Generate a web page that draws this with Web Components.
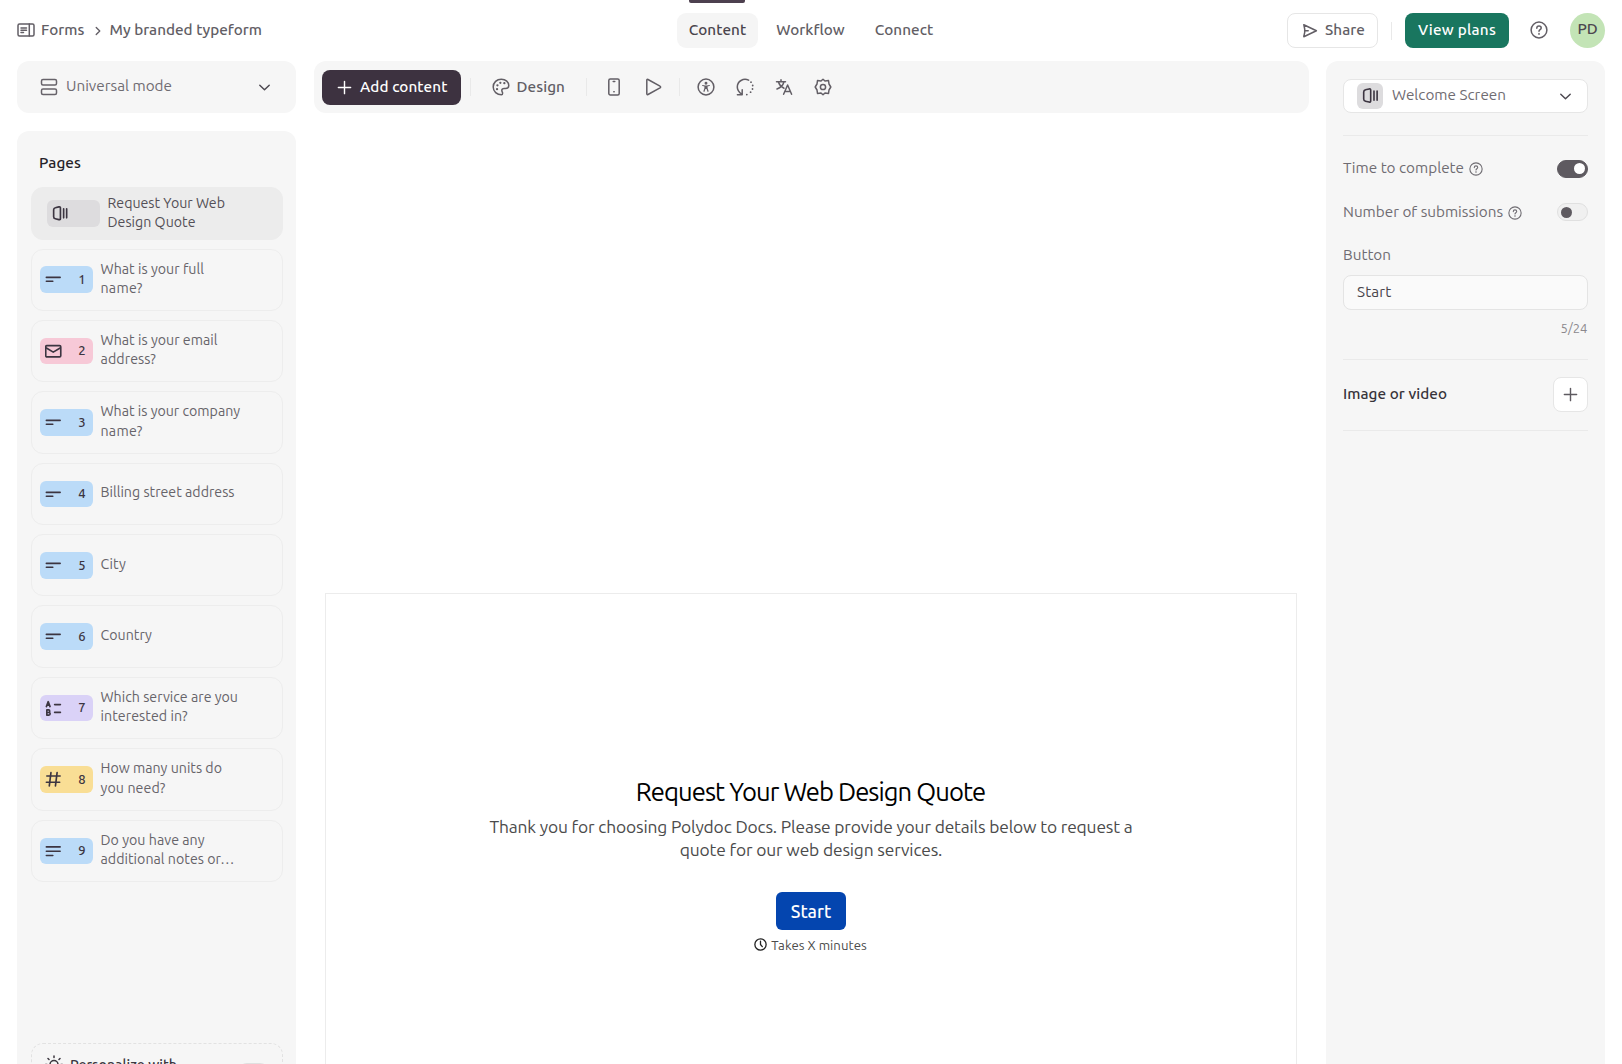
<!DOCTYPE html>
<html lang="en">
<head>
<meta charset="utf-8">
<title>My branded typeform</title>
<style>
  html, body { margin: 0; height: 100%; }
  body {
    font-family: Ubuntu, "Noto Sans", "Open Sans", sans-serif;
    font-size: 15.27px;
    line-height: 20px;
    color: #5e5a60;
    background: #fff;
    overflow: hidden;
  }
</style>
</head>
<body>
<form-builder></form-builder>

<script>
const ICONS = {
  forms: '<rect x="1" y="3" width="16" height="12" rx="1.5"/><path d="M12.3 3v12M4 7h5.5M4 9.3h5.5M4 11.6h2.5"/>',
  next: '<path d="M7 5l4 4-4 4"/>',
  down: '<path d="M4 6.5l5 5 5-5"/>',
  layout: '<rect x="1.5" y="1.5" width="15" height="5.5" rx="1.5"/><rect x="1.5" y="11" width="15" height="5.5" rx="1.5"/>',
  share: '<path d="M2.8 2.7L15.4 8.7 2.8 14.7l.9-4.3V7zM3.7 8.7h3.5"/>',
  help: '<circle cx="9" cy="9" r="7.9"/><path d="M6.8 7.2c0-1.3 1-2.2 2.2-2.2s2.2.8 2.2 2c0 1.6-2.2 1.6-2.2 3.2M9 12.4v.9"/>',
  plus: '<path d="M9 2.5v13M2.5 9h13"/>',
  palette: '<path d="M9.5 16.8C5 16.8 1.2 13.5 1.2 9S4.8 1.2 9.3 1.2s7.5 2.9 7.5 6.4c0 2-1.3 3-3.3 3h-1.3c-1.6 0-2.4.8-2.4 2 0 1.1.8 1.5.8 2.6 0 .9-.4 1.6-1.1 1.6z"/><path d="M8.3 4.8h.1M12.3 5.2h.1M5.4 7.3h.1M5 11.2h.1" stroke-width="2.2"/>',
  phone: '<rect x="3.8" y="1" width="10.4" height="16" rx="1.5"/><path d="M8.2 3.6h1.6M8.8 13.8h.4"/>',
  play: '<path d="M2.8 2.2c0-.8.5-1 1.2-.7l12 6.6c.8.4.8 1.3 0 1.8l-12 6.6c-.7.3-1.2.1-1.2-.7z"/>',
  access: '<circle cx="9" cy="9" r="7.9"/><circle cx="9" cy="5.2" r=".7"/><path d="M5.7 7.5l2.3.5h2l2.3-.5M8 8v2.3l-1 3M10 8v2.3l1 3M8 10.5h2M9 8v2" stroke-width="1.2"/>',
  loop: '<path d="M12.6 2.2C7.5-.3 1.3 3.2 1.3 9c0 2.9 1.9 5.5 4.6 7.2M6.2 11.7v5H1.4"/><path d="M15 4.2h.01M16.7 7.5h.01M16.5 11h.01M14.6 14.2h.01M10.8 16.6h.01" stroke-width="1.8"/>',
  translate: '<path d="M1.5 3.8h9M6 1.8v2M9 3.8C8 7.5 5.5 9.8 2 11M3.6 4.5C4.5 7 6.8 9.3 9 10.2M8.6 16.3L12.6 7l4 9.3M10 13.6h5.3"/>',
  gear: '<path d="M9 1.200l2 1.800 3.500-.5.500 3.500 1.800 3-1.800 3-.5 3.500-3.500-.5-2 1.800-2-1.800-3.500.5-.5-3.500L1.200 9 3 6l.5-3.500 3.500.5z"/><circle cx="9" cy="9" r="2.600"/>',
  door: '<path d="M1.8 5.2c0-1.3.5-2 1.8-2.2l3.9-.9c1-.2 1.7.1 1.7 1v11.8c0 .9-.7 1.2-1.7 1L3.6 15c-1.3-.2-1.8-.9-1.8-2.2zM12.7 4.2v9.8M16 4.2v9.8"/>',
  short: '<path d="M1.5 7h15M1.5 11.2h7"/>',
  long: '<path d="M1.5 4.3h15M1.5 9h15M1.5 13.6h7"/>',
  mail: '<rect x=".8" y="2.8" width="16.4" height="12.4" rx="1.3"/><path d="M1.5 5.5L9 10l7.5-4.5"/>',
  choice: '<path d="M1.5 7.2l2-5.4 2 5.4M2.3 5.6h2.5M2 10.8v5.7h2.2c1.9 0 1.9-2.9 0-2.9H2h1.9c1.7 0 1.7-2.8 0-2.8zM10.5 5h6.3M10.5 13.5h6.3"/>',
  number: '<path d="M6.5 1.8L4.7 16.2M13.2 1.8l-1.8 14.4M2 5.5h14.5M1.5 12.3H16"/>',
  clock: '<circle cx="9" cy="9" r="7.8"/><path d="M9 4.5V9l2.5 3"/>',
  sun: '<circle cx="9" cy="9.5" r="4"/><path d="M9 1v1.5M3 3.5l1 1M15 3.5l-1 1M.5 9.5H2M16 9.5h1.5"/>'
};

// Every element clones one template into an open shadow root.
function define(name, html, setup) {
  const template = document.createElement('template');
  template.innerHTML = html;
  customElements.define(name, class extends HTMLElement {
    constructor() {
      super();
      this.attachShadow({ mode: 'open' }).append(template.content.cloneNode(true));
    }
    connectedCallback() {
      if (setup) setup(this, this.shadowRoot);
    }
  });
}

define('ui-icon', `
  <style>
    :host { display: block; flex: none; width: 18px; height: 18px; }
    svg { display: block; width: 100%; height: 100%; fill: none; stroke: currentColor;
      stroke-width: var(--stroke, 1.5); stroke-linecap: round; stroke-linejoin: round; }
  </style>
  <svg viewBox="0 0 18 18"></svg>
`, (host, root) => {
  root.querySelector('svg').innerHTML = ICONS[host.getAttribute('name')];
});

define('ui-divider', `
  <style>
    :host { display: block; flex: none; width: 1px; height: 18px; background: #e9e9e9; }
    :host([flat]) { width: auto; height: 1px; background: #eaeaea; }
  </style>
`);

define('ui-toggle', `
  <style>
    :host { display: flex; flex: none; align-items: center; box-sizing: border-box; width: 31px; height: 18px;
      padding: 0 3px; border: 1px solid #e0e0e0; border-radius: 9px; background: #f0f0f0; }
    :host([on]) { justify-content: flex-end; background: #5e5a60; border-color: #5e5a60; padding: 0 2px; }
    i { width: 11px; height: 11px; border-radius: 50%; background: #5e5a60; }
    :host([on]) i { background: #fff; }
  </style>
  <i></i>
`);

define('app-header', `
  <style>
    :host { display: grid; grid-template-columns: 1fr auto 1fr; height: 61px; box-sizing: border-box;
      padding: 0 17px; color: #625e65; }
    nav, .tabs, .actions { display: flex; align-items: flex-start; }
    nav { padding-top: 20px; align-items: center; height: 20px; }
    nav ui-icon:nth-of-type(2) { margin: 2px 4px 0 5px; }
    .tab { position: relative; display: flex; height: 35px; box-sizing: border-box; margin-top: 13px; padding: 7px 12px; border-radius: 9px; }
    .tab.active { background: #f5f5f5; color: #4a454d; margin-right: 6px; }
    .tab.active::before { content: ""; position: absolute; left: 12px; right: 13px; top: -13px; height: 3px;
      background: #4d404f; border-radius: 0 0 2px 2px; }
    .actions { justify-content: flex-end; padding-top: 13px; }
    .btn { display: flex; box-sizing: border-box; height: 35px; padding: 7px 13px; border-radius: 8px; }
    .share { border: 1px solid #e6e6e6; padding: 6px 0 0 13px; width: 91px; gap: 6px; }
    .share ui-icon { margin-top: 2px; }
    .plans { background: #19765f; color: #fff; }
    ui-divider { margin: 9px 13px 0 13px; }
    .help { margin: 8px 22px 0 21px; }
    .avatar { display: flex; justify-content: center; box-sizing: border-box; width: 35px; height: 35px; border-radius: 50%;
      background: #c3e4b6; padding-top: 6px; color: #4c474f; }
  </style>
  <nav>
    <ui-icon name="forms"></ui-icon>
    <fit-text w="43.5" heavy style="margin-left:6px">Forms</fit-text>
    <ui-icon name="next" style="width:16px;height:16px"></ui-icon>
    <fit-text w="152.5" heavy>My branded typeform</fit-text>
  </nav>
  <div class="tabs">
    <div class="tab active"><fit-text w="57.5" heavy>Content</fit-text></div>
    <div class="tab"><fit-text w="68.5" heavy>Workflow</fit-text></div>
    <div class="tab" style="padding-left:18px"><fit-text w="58.5" heavy>Connect</fit-text></div>
  </div>
  <div class="actions">
    <div class="btn share"><ui-icon name="share"></ui-icon><fit-text w="40" heavy>Share</fit-text></div>
    <ui-divider></ui-divider>
    <div class="btn plans"><fit-text w="78" heavy>View plans</fit-text></div>
    <ui-icon class="help" name="help"></ui-icon>
    <div class="avatar"><fit-text w="20" heavy>PD</fit-text></div>
  </div>
`);

define('mode-picker', `
  <style>
    :host { display: flex; align-items: center; box-sizing: border-box; height: 52px; padding: 0 23px;
      border-radius: 12px; background: #f6f6f6; color: #6f6c72; }
    fit-text { margin: 0 auto 2px 8px; }
    ui-icon { color: #67636a; }
  </style>
  <ui-icon name="layout"></ui-icon>
  <fit-text w="106">Universal mode</fit-text>
  <ui-icon name="down" style="width:17px;height:17px;color:#4c4850"></ui-icon>
`);

define('page-item', `
  <style>
    :host { display: flex; align-items: center; flex: none; box-sizing: border-box; height: 62.4px; margin-bottom: 9px;
      padding-left: 8px; border: 1px solid #ededed; border-radius: 12px; font-size: 14.2px; line-height: 19.2px; color: #67646a; }
    :host([selected]) { height: 53px; margin-bottom: 8.5px; padding-left: 15px; border-color: #ececec; background: #ececec; color: #545057; }
    .chip { display: flex; align-items: center; justify-content: space-between; box-sizing: border-box; width: 52.5px; height: 26.5px;
      padding: 0 7px 0 5px; border-radius: 6px; background: var(--chip, #bbdbf8); color: #3c3541; font-size: 13px; font-weight: 500; }
    ui-icon { width: 16.5px; height: 16.5px; --stroke: 1.8; }
    .text { display: flex; flex-direction: column; margin: 0 0 1.6px 8px; }
  </style>
  <span class="chip"><span></span></span>
  <div class="text"><slot></slot></div>
`, (host, root) => {
  const icon = document.createElement('ui-icon');
  icon.setAttribute('name', host.getAttribute('icon'));
  root.querySelector('.chip').prepend(icon);
  root.querySelector('.chip span').textContent = host.getAttribute('number') || '';
});

define('pages-panel', `
  <style>
    :host { display: flex; flex-direction: column; flex: 1; min-height: 0; overflow: hidden; box-sizing: border-box;
      padding: 22px 13px 0 14px; border-radius: 12px 12px 0 0; background: #f6f6f6; }
    h2 { margin: 0 0 14px 8px; font: inherit; color: #262228; }
    .ai { display: flex; flex: none; align-items: flex-start; box-sizing: border-box; height: 80px; margin-top: 152px;
      padding: 11px 13px; border: 1px dashed #e2e2e2; border-radius: 12px; color: #3c373f; font-size: 14.2px; line-height: 20px; }
    .ai fit-text { margin: 0 auto 0 7px; }
    .ai ui-toggle { margin-top: 8px; }
  </style>
  <h2><fit-text w="42" heavy>Pages</fit-text></h2>
  <page-item selected icon="door" style="--chip:#dddcde"><fit-text w="117.5">Request Your Web</fit-text><fit-text w="88">Design Quote</fit-text></page-item>
  <page-item icon="short" number="1"><fit-text w="103.5">What is your full</fit-text><fit-text w="42">name?</fit-text></page-item>
  <page-item icon="mail" number="2" style="--chip:#f7c9d7"><fit-text w="117">What is your email</fit-text><fit-text w="55.5">address?</fit-text></page-item>
  <page-item icon="short" number="3"><fit-text w="139.5">What is your company</fit-text><fit-text w="42">name?</fit-text></page-item>
  <page-item icon="short" number="4"><fit-text w="134">Billing street address</fit-text></page-item>
  <page-item icon="short" number="5"><fit-text w="25.5">City</fit-text></page-item>
  <page-item icon="short" number="6"><fit-text w="51.5">Country</fit-text></page-item>
  <page-item icon="choice" number="7" style="--chip:#dad2f7"><fit-text w="137.5">Which service are you</fit-text><fit-text w="87">interested in?</fit-text></page-item>
  <page-item icon="number" number="8" style="--chip:#f9de95"><fit-text w="121.5">How many units do</fit-text><fit-text w="65">you need?</fit-text></page-item>
  <page-item icon="long" number="9"><fit-text w="104">Do you have any</fit-text><fit-text w="134">additional notes or…</fit-text></page-item>
  <div class="ai"><ui-icon name="sun"></ui-icon><fit-text w="107" heavy>Personalize with</fit-text><ui-toggle></ui-toggle></div>
`);

define('content-toolbar', `
  <style>
    :host { display: flex; align-items: center; flex: none; box-sizing: border-box; height: 52px; padding-left: 8px;
      border-radius: 12px; background: #f6f6f6; color: #625e65; }
    .add { display: flex; align-items: center; box-sizing: border-box; width: 139px; height: 35px; padding: 0 0 0 14px;
      border-radius: 8px; background: #3d3240; color: #fff; gap: 7.5px; }
    .add ui-icon { width: 17px; height: 17px; }
    fit-text { padding-bottom: 1px; }
    .design { display: flex; align-items: center; gap: 7px; margin: 0 21px; }
    .tools { display: flex; gap: 21.2px; margin-right: 17px; }
    .tools:last-of-type { margin: 0 0 0 17px; }
  </style>
  <div class="add"><ui-icon name="plus"></ui-icon><fit-text w="87.5" heavy>Add content</fit-text></div>
  <ui-divider style="margin-left:9px"></ui-divider>
  <div class="design"><ui-icon name="palette"></ui-icon><fit-text w="48.5" heavy>Design</fit-text></div>
  <ui-divider style="margin-right:17.5px"></ui-divider>
  <div class="tools"><ui-icon name="phone"></ui-icon><ui-icon name="play"></ui-icon></div>
  <ui-divider></ui-divider>
  <div class="tools"><ui-icon name="access"></ui-icon><ui-icon name="loop"></ui-icon><ui-icon name="translate"></ui-icon><ui-icon name="gear"></ui-icon></div>
`);

define('form-preview', `
  <style>
    :host { display: flex; flex-direction: column; align-items: center; flex: 1; box-sizing: border-box;
      margin: 479.5px 12px 0 11px; padding-top: 180px; border: 1px solid #ececec; border-bottom: 0; background: #fff; color: #4b4b4b; }
    h1 { margin: 0; font-size: 25.6px; font-weight: 400; line-height: 36px; color: #000; }
    p { display: flex; flex-direction: column; align-items: center; margin: 5px 0 31px; padding-left: 1px; font-size: 17.4px; line-height: 23px; }
    .start { display: flex; justify-content: center; box-sizing: border-box; width: 70px; height: 38px; padding-top: 7px; margin-left: 1px;
      border-radius: 6px; background: #0445af; color: #fff; font-size: 17.8px; line-height: 24px; }
    .time { display: flex; align-items: center; gap: 4px; margin-top: 5px; font-size: 13.2px; }
    .time ui-icon { width: 13px; height: 13px; --stroke: 1.8; color: #222; margin-bottom: 1px; }
  </style>
  <h1><fit-text w="349.5">Request Your Web Design Quote</fit-text></h1>
  <p>
    <fit-text w="643">Thank you for choosing Polydoc Docs. Please provide your details below to request a</fit-text>
    <fit-text w="262.5">quote for our web design services.</fit-text>
  </p>
  <div class="start"><fit-text w="40.5" heavy>Start</fit-text></div>
  <div class="time"><ui-icon name="clock"></ui-icon><fit-text w="95.5">Takes X minutes</fit-text></div>
`);

define('setting-row', `
  <style>
    :host { display: flex; align-items: center; height: 20px; }
    ui-icon { width: 14px; height: 14px; margin: 2px auto 0 4.5px; --stroke: 1.4; }
    ui-toggle { margin-top: 1px; }
  </style>
  <slot></slot>
  <ui-icon name="help"></ui-icon>
  <ui-toggle></ui-toggle>
`, (host, root) => {
  root.querySelector('ui-toggle').toggleAttribute('on', host.hasAttribute('on'));
});

define('settings-panel', `
  <style>
    :host { display: flex; flex-direction: column; box-sizing: border-box; padding: 18px 17.5px 0 17px; border-radius: 12px 12px 0 0;
      background: #f6f6f6; color: #6f6c72; }
    .select { display: flex; align-items: center; box-sizing: border-box; height: 34px; margin-bottom: 22px; padding: 0 13px;
      border: 1px solid #e6e6e6; border-radius: 8px; background: #fff; }
    .select fit-text { margin: 0 auto 2px 9px; }
    .badge { display: grid; place-items: center; width: 26px; height: 26px; border-radius: 6px; background: #dddcde; color: #3c3541; }
    .badge ui-icon { width: 17px; height: 17px; --stroke: 1.7; margin-bottom: 1px; }
    setting-row { margin-bottom: 23.5px; }
    .input { box-sizing: border-box; height: 35px; margin-top: 10px; padding: 6px 13px; border: 1px solid #e4e4e4; border-radius: 8px;
      background: #fafafa; color: #49454c; }
    .count { align-self: flex-end; margin: 7.500px 0 21.500px; font-size: 13px; color: #8b888d; }
    .media { display: flex; align-items: center; justify-content: space-between; padding: 17px 0 18px; color: #37333a; }
    .media fit-text { margin-bottom: 2px; }
    .media span { display: grid; place-items: center; box-sizing: border-box; width: 35px; height: 35px; border: 1px solid #e6e6e6;
      border-radius: 8px; background: #fff; color: #5e5a60; }
  </style>
  <div class="select">
    <div class="badge"><ui-icon name="door"></ui-icon></div>
    <fit-text w="114">Welcome Screen</fit-text>
    <ui-icon name="down" style="width:17px;height:17px;color:#4c4850"></ui-icon>
  </div>
  <ui-divider flat style="margin-bottom:22px"></ui-divider>
  <setting-row on><fit-text w="121">Time to complete</fit-text></setting-row>
  <setting-row><fit-text w="160">Number of submissions</fit-text></setting-row>
  <fit-text w="48">Button</fit-text>
  <div class="input"><fit-text w="34.5">Start</fit-text></div>
  <fit-text class="count" w="27">5/24</fit-text>
  <ui-divider flat></ui-divider>
  <div class="media"><fit-text w="104" heavy>Image or video</fit-text><span><ui-icon name="plus" style="width:17px;height:17px"></ui-icon></span></div>
  <ui-divider flat></ui-divider>
`);

define('form-builder', `
  <style>
    :host { display: flex; flex-direction: column; height: 100vh; }
    app-header { flex: none; }
    main { display: grid; grid-template-columns: 279px 1fr 279px; column-gap: 17.5px; flex: 1; min-height: 0; padding: 0 17px; }
    aside, section { display: flex; flex-direction: column; min-height: 0; }
    aside { gap: 18px; }
  </style>
  <app-header></app-header>
  <main>
    <aside><mode-picker></mode-picker><pages-panel></pages-panel></aside>
    <section><content-toolbar></content-toolbar><form-preview></form-preview></section>
    <settings-panel></settings-panel>
  </main>
`);

// Spreads one line of text over a set width. Defined last, so that fonts are inherited before it measures.
define('fit-text', `
  <style>
    :host { display: block; flex: none; white-space: nowrap; }
    :host([heavy]) { font-weight: 500; }
    span { display: inline-block; }
  </style>
  <span><slot></slot></span>
`, (host, root) => {
  const width = parseFloat(host.getAttribute('w'));
  const span = root.querySelector('span');
  const natural = span.getBoundingClientRect().width;
  span.style.letterSpacing = (width - natural) / host.textContent.length + 'px';
  host.style.width = width + 'px';
});
</script>
</body>
</html>
